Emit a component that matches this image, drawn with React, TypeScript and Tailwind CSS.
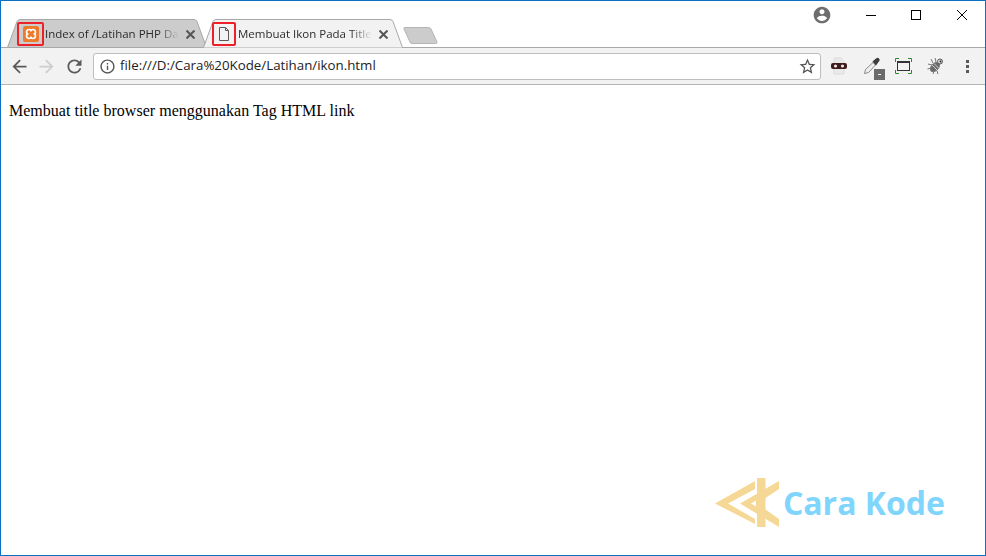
import type { ReactNode } from "react";

const uiFont = "font-['Open_Sans','Noto_Sans',sans-serif]";

function MaterialIcon({ d, size, className }: { d: string; size: number; className: string }) {
  return (
    <svg width={size} height={size} viewBox="0 0 24 24" fill="currentColor" className={`shrink-0 ${className}`}>
      <path d={d} />
    </svg>
  );
}

function TabShape({ active }: { active: boolean }) {
  return (
    <svg className="absolute inset-0" width="200" height="29" viewBox="0 0 200 29">
      <path
        d="M0.5 28.5 L10 2.5 Q11 0.5 13 0.5 L187 0.5 Q189 0.5 190 2.5 L199.5 28.5"
        fill={active ? "#f2f2f2" : "#cccccc"}
        stroke="#a8a8a8"
      />
      {!active && <path d="M0 28.5H200" stroke="#a8a8a8" />}
    </svg>
  );
}

function XamppIcon() {
  return (
    <svg width="16" height="16" viewBox="0 0 16 16">
      <rect width="16" height="16" rx="2" fill="#ee7a2c" />
      <path
        d="M6 3.500a2.500 2.500 0 0 0-1.500 4.500a2.500 2.500 0 0 0 1.500 4.500a2.500 2.500 0 0 0 2-1a2.500 2.500 0 0 0 2 1a2.500 2.500 0 0 0 1.500-4.500a2.500 2.500 0 0 0-1.500-4.500a2.500 2.500 0 0 0-2 1a2.500 2.500 0 0 0-2-1z"
        fill="none"
        stroke="#fff"
        strokeWidth="1.700"
      />
      <rect x="6.500" y="6.500" width="3" height="3" fill="#ee7a2c" />
    </svg>
  );
}

function PageIcon() {
  return (
    <svg width="16" height="16" viewBox="0 0 16 16" fill="none" stroke="#5a5a5a">
      <path d="M3.500 1.500h6l3 3v10h-9z M9.500 1.500v3h3" />
    </svg>
  );
}

function Tab({
  title,
  active,
  icon,
  boxClass,
  textClass,
  closeClass,
}: {
  title: string;
  active: boolean;
  icon: ReactNode;
  boxClass: string;
  textClass: string;
  closeClass: string;
}) {
  return (
    <div className="relative flex h-[29px] w-[200px] shrink-0 items-center">
      <TabShape active={active} />
      <div className={`relative flex h-[24px] items-center justify-center rounded-[2px] border-2 border-[#ee2028] ${boxClass}`}>
        {icon}
      </div>
      <span
        className={`relative w-fit whitespace-nowrap text-[11.5px] leading-[16px] text-[#2b2b2b] [mask-image:linear-gradient(to_right,black_84%,transparent)] ${uiFont} ${textClass}`}
      >
        {title}
      </span>
      <svg width="9" height="9" viewBox="0 0 9 9" stroke="#555" strokeWidth="2" className={`absolute top-[11px] ${closeClass}`}>
        <path d="M0.500 0.500l8 8M8.500 0.500l-8 8" />
      </svg>
    </div>
  );
}

function WindowControls() {
  return (
    <div className="flex h-fit items-center pt-[4px] pr-[18px]">
      <MaterialIcon
        size={20}
        className="mr-[34px] text-[#6e6e6e]"
        d="M12 2C6.480 2 2 6.480 2 12s4.480 10 10 10 10-4.480 10-10S17.520 2 12 2zm0 3c1.660 0 3 1.340 3 3s-1.340 3-3 3-3-1.340-3-3 1.340-3 3-3zm0 14.200c-2.500 0-4.710-1.280-6-3.220.03-1.990 4-3.080 6-3.080 1.990 0 5.970 1.090 6 3.080-1.290 1.940-3.500 3.220-6 3.220z"
      />
      <div className="mr-[35px] h-[1px] w-[10px] bg-black" />
      <div className="mr-[36px] h-[10px] w-[10px] border border-black" />
      <svg width="10" height="10" viewBox="0 0 10 10" stroke="#000">
        <path d="M0 0l10 10M10 0l-10 10" />
      </svg>
    </div>
  );
}

function Extensions() {
  return (
    <div className="ml-[9px] flex items-center">
      {/* topeng */}
      <svg width="18" height="18" viewBox="0 0 18 18" className="mr-[13px]">
        <path d="M4 1h7l3 3v13H4z" fill="#e9e9e9" stroke="#dcdcdc" />
        <rect x="1" y="6" width="16" height="6" rx="2" fill="#3f1c1c" />
        <circle cx="5.500" cy="9" r="1.600" fill="#e8e8e8" />
        <circle cx="12.500" cy="9" r="1.600" fill="#e8e8e8" />
      </svg>
      {/* pipet warna */}
      <div className="relative mr-[10px] h-[24px] w-[24px]">
        <svg width="18" height="18" viewBox="0 0 18 18" className="ml-[2px] mt-[3px]">
          <path d="M1.500 16.500 L2.500 12.500 L10 5.500 L12.500 8 L5.500 15.500z" fill="#eeeeee" stroke="#8a8a8a" />
          <path d="M9.500 4.500 L13 1.500 Q15 0 16 1.500 Q17.500 3 15.500 5 L13 8.500z" fill="#3c3c3c" />
        </svg>
        <div className="absolute bottom-[-2px] right-0 flex h-[11px] w-[11px] items-center justify-center bg-[#6b6b6b]">
          <div className="h-[1px] w-[3px] bg-white" />
        </div>
      </div>
      {/* tangkapan layar */}
      <svg width="17" height="16" viewBox="0 0 17 16" className="mr-[15px]" fill="none">
        <path d="M0.500 4V0.500H4M13 0.500h3.500V4M0.500 12v3.500H4M13 15.500h3.500V12" stroke="#2d8a2d" />
        <rect x="2.500" y="3.500" width="12" height="9" stroke="#333" />
        <path d="M2.500 4.500h12" stroke="#333" />
      </svg>
      {/* kumbang */}
      <svg width="18" height="18" viewBox="0 0 18 18" className="mr-[21px]" stroke="#777" fill="none">
        <ellipse cx="8" cy="10" rx="3.500" ry="5.500" transform="rotate(45 8 10)" fill="#6a6a6a" />
        <path d="M5 8l5 5M7 6.500l5 5" stroke="#cfcfcf" />
        <circle cx="13" cy="4.500" r="2.500" fill="#e2e2e2" stroke="#555" />
        <circle cx="13.500" cy="4.500" r="1" fill="#222" stroke="none" />
        <path d="M1 7l4 1M0.500 12l4-1M6 17l1-3M11 17l-1-3M8 1l1 4M4 2l2 4" />
      </svg>
      <div className="flex flex-col gap-[2px]">
        <div className="h-[3px] w-[3px] bg-[#5a5a5a]" />
        <div className="h-[3px] w-[3px] bg-[#5a5a5a]" />
        <div className="h-[3px] w-[3px] bg-[#5a5a5a]" />
      </div>
    </div>
  );
}

export default function App() {
  return (
    <div className="flex h-[556px] w-[986px] flex-col overflow-hidden border border-[#0b70c4] bg-white">
      {/* tab strip */}
      <div className="flex h-[47px] shrink-0 justify-between border-b border-[#a8a8a8]">
        <div className="mb-[-1px] flex items-end pl-[6px]">
          <Tab
            title="Index of /Latihan PHP Da"
            active={false}
            boxClass="ml-[10px] w-[27px]"
            textClass="ml-[1px]"
            closeClass="left-[179px]"
            icon={<XamppIcon />}
          />
          <div className="ml-[-4px]">
            <Tab
              title="Membuat Ikon Pada Title"
              active
              boxClass="ml-[9px] w-[24px]"
              textClass="ml-[2px]"
              closeClass="left-[176px]"
              icon={<PageIcon />}
            />
          </div>
          <svg width="36" height="19" viewBox="0 0 36 19" className="mb-[3px]">
            <path d="M1.500 1.500h24q1.500 0 2.500 1.500l6 13q.5 1.500-1.500 1.500H9q-1.500 0-2-1.500L1 3q-.5-1.500 .5-1.500z" fill="#cccccc" stroke="#b5b5b5" />
          </svg>
        </div>
        <WindowControls />
      </div>

      {/* toolbar */}
      <div className="flex h-[37px] shrink-0 items-center border-b border-[#b4b4b4] bg-[#f2f2f2] pl-[8px]">
        <MaterialIcon
          size={21}
          className="text-[#5a5a5a]"
          d="M20 11H7.830l5.590-5.590L12 4l-8 8 8 8 1.410-1.410L7.830 13H20v-2z"
        />
        <MaterialIcon
          size={21}
          className="ml-[6px] text-[#cdcdcd]"
          d="M12 4l-1.410 1.410L16.170 11H4v2h12.170l-5.580 5.590L12 20l8-8z"
        />
        <MaterialIcon
          size={21}
          className="ml-[7px] text-[#5a5a5a]"
          d="M17.650 6.350A7.958 7.958 0 0 0 12 4c-4.420 0-7.990 3.580-7.990 8s3.570 8 7.990 8c3.730 0 6.840-2.550 7.730-6h-2.080A5.990 5.990 0 0 1 12 18c-3.310 0-6-2.690-6-6s2.690-6 6-6c1.660 0 3.140.690 4.220 1.780L13 11h7V4l-2.350 2.350z"
        />
        <div className="ml-[8px] flex h-[27px] w-[728px] shrink-0 items-center rounded-[3px] border border-[#bdbdbd] bg-white pl-[5px] pr-[3px]">
          <MaterialIcon
            size={17}
            className="text-[#555]"
            d="M11 7h2v2h-2zm0 4h2v6h-2zm1-9C6.480 2 2 6.480 2 12s4.480 10 10 10 10-4.480 10-10S17.520 2 12 2zm0 18c-4.410 0-8-3.590-8-8s3.590-8 8-8 8 3.590 8 8-3.590 8-8 8z"
          />
          <span className={`ml-[4px] flex-1 text-[13.3px] text-[#222] ${uiFont}`}>file:///D:/Cara%20Kode/Latihan/ikon.html</span>
          <MaterialIcon
            size={19}
            className="text-[#555]"
            d="M22 9.240l-7.190-.620L12 2 9.190 8.630 2 9.240l5.460 4.730L5.820 21 12 17.270 18.180 21l-1.630-7.030L22 9.240zM12 15.400l-3.760 2.270 1-4.280-3.320-2.880 4.380-.380L12 6.100l1.710 4.040 4.380.380-3.320 2.880 1 4.280L12 15.400z"
          />
        </div>
        <Extensions />
      </div>

      {/* page */}
      <div className="relative flex-1">
        <p className="m-[8px] mt-[17px] font-['Liberation_Serif',serif] text-[16px] leading-[18px] tracking-[0.02px] text-black">
          Membuat title browser menggunakan Tag HTML link
        </p>
        <div className="absolute bottom-[27px] right-[40px] flex items-center">
          <svg width="65" height="51" viewBox="0 0 65 51" fill="#f6d896">
            <path d="M0 26.500 L40 4 V12 L13 26.500 L40 42 V47z" />
            <path d="M25 26.500 L64 4 V12 L42 26.500 L64 42 V50z M36 26.500 L41 23.500 V29.500z" fillRule="evenodd" />
            <rect x="42" y="1" width="8.500" height="49" />
          </svg>
          <span className="ml-[3px] font-['Open_Sans',sans-serif] text-[32px] font-bold leading-none text-[#7fd5fc]">
            Cara Kode
          </span>
        </div>
      </div>
    </div>
  );
}
